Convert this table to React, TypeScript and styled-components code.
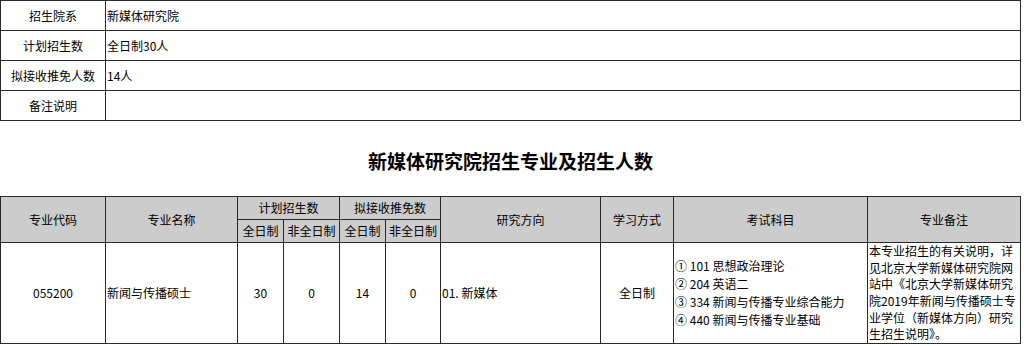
import styled, { createGlobalStyle } from "styled-components";

const GlobalStyle = createGlobalStyle`
  body {
    margin: 0;
    background: #fff;
    font-family: "Noto Sans CJK SC", "Noto Sans", sans-serif;
    color: #000;
  }
`;

const Page = styled.div`
  width: 1021px;
`;

const Table = styled.table`
  width: 1021px;
  border-collapse: collapse;
  table-layout: fixed;
  font-size: 12px;
`;

const Cell = styled.td<{ $align?: string }>`
  border: 1px solid #2a2a2a;
  padding: 0 1px;
  text-align: ${props => props.$align || "center"};
  vertical-align: middle;
  background: #fff;
  line-height: 18px;
  white-space: nowrap;
`;

const InfoRow = styled.tr`
  height: 30px;
`;

const HeadCell = styled.th`
  border: 1px solid #2a2a2a;
  background: #cccccc;
  font-weight: normal;
  padding: 0;
  height: 22px;
  line-height: 18px;
  white-space: nowrap;
`;

const Title = styled.h2`
  margin: 0;
  height: 75px;
  display: flex;
  align-items: center;
  justify-content: center;
  font-size: 19px;
  font-weight: bold;
  padding-top: 4px;
  box-sizing: border-box;
`;

const BodyRow = styled.tr`
  height: 101px;
`;

const Wrap = styled.div`
  white-space: normal;
  word-break: break-all;
  line-height: 16.6px;
  text-align: left;
`;

const SubjectList = styled.div`
  text-align: left;
  line-height: 18px;
`;

const info = [
  ["招生院系", "新媒体研究院"],
  ["计划招生数", "全日制30人"],
  ["拟接收推免人数", "14人"],
  ["备注说明", ""],
];

const subjects = [
  "① 101 思想政治理论",
  "② 204 英语二",
  "③ 334 新闻与传播专业综合能力",
  "④ 440 新闻与传播专业基础",
];

function App() {
  return (
    <Page>
      <GlobalStyle />
      <Table>
        <colgroup>
          <col style={{ width: 105 }} />
          <col />
        </colgroup>
        <tbody>
          {info.map(([k, v]) => (
            <InfoRow key={k}>
              <Cell>{k}</Cell>
              <Cell $align="left">{v}</Cell>
            </InfoRow>
          ))}
        </tbody>
      </Table>
      <Title>新媒体研究院招生专业及招生人数</Title>
      <Table>
        <colgroup>
          <col style={{ width: 105 }} />
          <col style={{ width: 132 }} />
          <col style={{ width: 46 }} />
          <col style={{ width: 56 }} />
          <col style={{ width: 46 }} />
          <col style={{ width: 55 }} />
          <col style={{ width: 160 }} />
          <col style={{ width: 73 }} />
          <col style={{ width: 194 }} />
          <col />
        </colgroup>
        <thead>
          <tr>
            <HeadCell rowSpan={2}>专业代码</HeadCell>
            <HeadCell rowSpan={2}>专业名称</HeadCell>
            <HeadCell colSpan={2}>计划招生数</HeadCell>
            <HeadCell colSpan={2}>拟接收推免数</HeadCell>
            <HeadCell rowSpan={2}>研究方向</HeadCell>
            <HeadCell rowSpan={2}>学习方式</HeadCell>
            <HeadCell rowSpan={2}>考试科目</HeadCell>
            <HeadCell rowSpan={2}>专业备注</HeadCell>
          </tr>
          <tr>
            <HeadCell>全日制</HeadCell>
            <HeadCell>非全日制</HeadCell>
            <HeadCell>全日制</HeadCell>
            <HeadCell>非全日制</HeadCell>
          </tr>
        </thead>
        <tbody>
          <BodyRow>
            <Cell>055200</Cell>
            <Cell $align="left">新闻与传播硕士</Cell>
            <Cell>30</Cell>
            <Cell>0</Cell>
            <Cell>14</Cell>
            <Cell>0</Cell>
            <Cell $align="left">01. 新媒体</Cell>
            <Cell>全日制</Cell>
            <Cell $align="left">
              <SubjectList>
                {subjects.map(s => (
                  <div key={s}>{s}</div>
                ))}
              </SubjectList>
            </Cell>
            <Cell $align="left">
              <Wrap>
                本专业招生的有关说明，详见北京大学新媒体研究院网站中《北京大学新媒体研究院2019年新闻与传播硕士专业学位（新媒体方向）研究生招生说明》。
              </Wrap>
            </Cell>
          </BodyRow>
        </tbody>
      </Table>
    </Page>
  );
}

export default App;
